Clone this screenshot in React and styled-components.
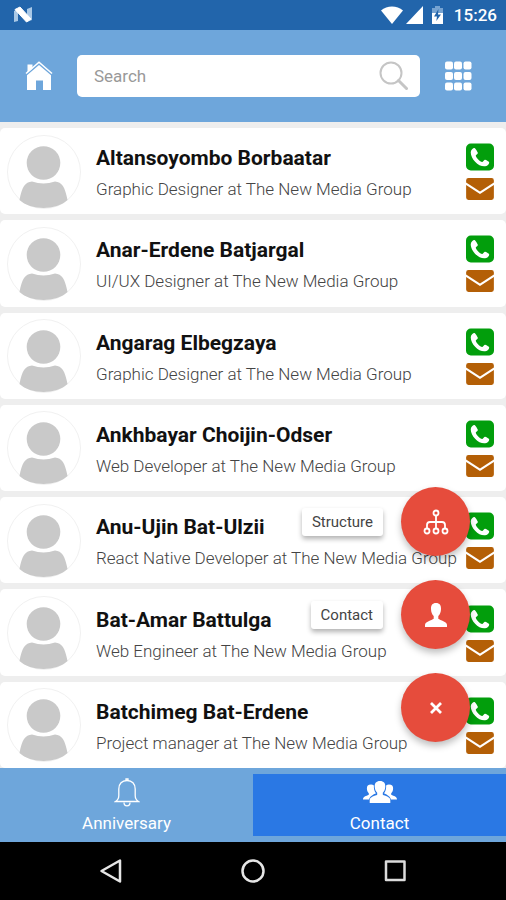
import React, { useState } from "react";
import styled, { createGlobalStyle, css } from "styled-components";

const GlobalStyle = createGlobalStyle`
  * {
    box-sizing: border-box;
  }

  body {
    margin: 0;
    background: #000;
    font-family: Roboto, "Liberation Sans", sans-serif;
  }

  button,
  input {
    font-family: inherit;
  }
`;

const Screen = styled.div`
  display: flex;
  flex-direction: column;
  min-height: 100vh;
`;

const StatusBar = styled.div`
  display: flex;
  align-items: center;
  height: 30px;
  padding: 0 9px 0 13px;
  background: #2265ab;
  color: #fff;
`;

const StatusIcons = styled.div`
  display: flex;
  align-items: center;
  gap: 3px;
  margin-left: auto;
`;

const Clock = styled.time`
  margin-left: 3px;
  font-size: 17px;
  line-height: 20px;
  font-weight: 500;
`;

const Header = styled.header`
  display: flex;
  align-items: center;
  height: 92px;
  padding: 0 34px 0 25px;
  gap: 24px;
  background: #6ea6db;
`;

const IconButton = styled.button`
  display: flex;
  padding: 0;
  border: 0;
  background: none;
  color: #fff;
  cursor: pointer;
`;

const SearchBox = styled.label`
  display: flex;
  flex: 1;
  align-items: center;
  min-width: 0;
  height: 42px;
  padding: 0 12px 0 17px;
  border-radius: 5px;
  background: #fff;
`;

const SearchInput = styled.input`
  flex: 1;
  min-width: 0;
  padding: 0;
  border: 0;
  outline: 0;
  background: none;
  font-size: 17px;
  line-height: 20px;
  color: #333;

  &::placeholder {
    color: #999;
    opacity: 1;
  }
`;

const Main = styled.main`
  position: relative;
  display: flex;
  flex: 1;
  flex-direction: column;
  background: #eee;
`;

const List = styled.ul`
  display: flex;
  flex: 1;
  flex-direction: column;
  gap: 6px;
  margin: 0;
  padding: 6px 0 0;
  list-style: none;
`;

const Card = styled.li`
  display: flex;
  flex: 1;
  align-items: center;
  padding: 5px 12px 4px 7px;
  border-radius: 5px;
  background: #fff;
`;

const Info = styled.div`
  flex: 1;
  min-width: 0;
  margin-left: 15px;
`;

const Name = styled.h2`
  margin: 0;
  padding-top: 2px;
  font-size: 21px;
  line-height: 26px;
  font-weight: 700;
  color: #111;
  white-space: nowrap;
`;

const Job = styled.p`
  margin: 7px 0 0;
  font-size: 17px;
  line-height: 22px;
  font-weight: 300;
  color: #444;
  white-space: nowrap;
`;

const Actions = styled.div`
  display: flex;
  flex-direction: column;
  gap: 7px;
`;

const FabMenu = styled.div`
  position: absolute;
  right: 36px;
  bottom: 26px;
  display: flex;
  flex-direction: column;
  align-items: flex-end;
  gap: 24px;
`;

const FabRow = styled.div`
  display: flex;
  align-items: center;
  gap: 18px;
`;

const FabLabel = styled.label`
  padding: 4px 10px;
  border-radius: 3px;
  background: #fff;
  box-shadow: 0 3px 5px rgba(0, 0, 0, 0.3);
  font-size: 15px;
  line-height: 20px;
  color: #444;
  cursor: pointer;
`;

const Fab = styled.button`
  display: flex;
  align-items: center;
  justify-content: center;
  width: 69px;
  height: 69px;
  padding: 0;
  border: 0;
  border-radius: 50%;
  background: #e64c3c;
  box-shadow: 0 4px 7px rgba(0, 0, 0, 0.25);
  color: #fff;
  cursor: pointer;
`;

const TabBar = styled.nav`
  display: flex;
  padding: 6px 0;
  background: #6ea6db;
`;

const Tab = styled.button`
  display: flex;
  flex: 1;
  flex-direction: column;
  align-items: center;
  gap: 4px;
  padding: 4px 0 2px;
  border: 0;
  background: none;
  font-size: 17px;
  line-height: 22px;
  color: #fff;
  cursor: pointer;

  ${({ $active }) =>
    $active &&
    css`
      background: #2a78e4;
    `}
`;

const SystemBar = styled.div`
  display: flex;
  align-items: center;
  justify-content: center;
  gap: 118px;
  height: 58px;
  background: #000;
`;

const NougatIcon = () => (
  <svg width="20" height="18" viewBox="0 0 20 18" aria-hidden="true">
    <path d="M1 5l4-2v12l-4 1z" fill="#a9c8e6" />
    <path d="M14 3l5-2v13l-5 2z" fill="#a9c8e6" />
    <path d="M2 3.500l5-2.500 11 12-4.500 3z" fill="#fff" stroke="#fff" strokeLinejoin="round" />
  </svg>
);

const WifiIcon = () => (
  <svg width="22" height="18" viewBox="0 0 22 18" aria-hidden="true">
    <path d="M11 18L0 4.500C6 -1 16 -1 22 4.500z" fill="#fff" />
  </svg>
);

const SignalIcon = () => (
  <svg width="17" height="18" viewBox="0 0 17 18" aria-hidden="true">
    <path d="M17 0v18H0z" fill="#fff" />
  </svg>
);

const BatteryIcon = () => (
  <svg width="22" height="18" viewBox="0 0 22 18" aria-hidden="true">
    <path d="M6 2h3V0h5v2h3v6H6z" fill="#76a3d1" />
    <path d="M6 7h11v11H6z" fill="#fff" />
    <path d="M12.500 3L8 10.500h3L10.300 15 15 8.500h-3z" fill="#2265ab" />
  </svg>
);

const HomeIcon = () => (
  <svg width="28" height="30" viewBox="0 0 28 30" aria-hidden="true">
    <path d="M2.500 3.500h5v4l-5 4.200z" fill="currentColor" />
    <path d="M1 12.500L14 1.200l13 11.300" fill="none" stroke="currentColor" strokeWidth="1.600" />
    <path d="M2 14.200L14 4l12 10.200V29h-8v-9.500h-7V29H2z" fill="currentColor" />
  </svg>
);

const SearchIcon = () => (
  <svg width="29" height="30" viewBox="0 0 29 30" fill="none" stroke="#c5c5c5" aria-hidden="true">
    <circle cx="12" cy="12" r="10.500" strokeWidth="2" />
    <path d="M19.500 19.500l8 8" strokeWidth="3" strokeLinecap="round" />
  </svg>
);

const GridIcon = () => (
  <svg width="28" height="30" viewBox="0 0 28 30" fill="currentColor" aria-hidden="true">
    {[0.5, 11, 21.5].map((y) =>
      [1, 10, 19.5].map((x) => (
        <rect key={`${x}-${y}`} x={x} y={y} width="8" height="8" rx="2" />
      ))
    )}
  </svg>
);

const Avatar = () => (
  <svg width="74" height="74" viewBox="0 0 74 74" aria-hidden="true">
    <circle cx="37" cy="37" r="36.500" fill="#fff" stroke="#f1f1f1" />
    <path
      d="M12.500 65C15 52 18 47 25 46.500c8 2.500 15 2.500 23 0 7 .5 10 5.500 12.500 18.500-11 10.500-37 10.500-48 0z"
      fill="#c9c9c9"
    />
    <circle cx="36.500" cy="28" r="18" fill="#fff" />
    <circle cx="36.500" cy="28" r="16.800" fill="#c9c9c9" />
  </svg>
);

const PhoneIcon = () => (
  <svg width="28" height="28" viewBox="0 0 29 28" aria-hidden="true">
    <rect width="29" height="28" rx="5" fill="#029e0c" />
    <path
      d="M8.800 4.700c-1-.3-3.800 1.500-3.900 4.300 0 7 7.600 14.600 14 14.700 3 0 5.300-2.100 5.100-4.300 0-.7-3.800-2.700-4.500-2.600-1 .1-1.900 2.300-2.800 2.300-2.100-.3-6.300-4.300-6.600-6.400 0-.9 2.200-1.800 2.200-2.800 0-.8-2.600-5-3.500-5.200z"
      fill="#fff"
    />
  </svg>
);

const MailIcon = () => (
  <svg width="28" height="22" viewBox="0 0 29 23" fill="#b45f06" aria-hidden="true">
    <path d="M2.500 0h24Q29 0 29 2.500v2.200L14.500 14.200 0 4.700V2.500Q0 0 2.500 0z" />
    <path d="M0 7.300l14.500 9.400L29 7.300v13.200Q29 23 26.500 23h-24Q0 23 0 20.500z" />
  </svg>
);

const StructureIcon = () => (
  <svg width="26" height="26" viewBox="0 0 26 26" fill="none" stroke="currentColor" strokeWidth="1.800" aria-hidden="true">
    <circle cx="13" cy="4" r="2.500" />
    <circle cx="4" cy="22" r="2.500" />
    <circle cx="13" cy="22" r="2.500" />
    <circle cx="22" cy="22" r="2.500" />
    <path d="M13 6.500v13M4 19.500V16q0-3 3-3h12q3 0 3 3v3.500" />
  </svg>
);

const PersonIcon = () => (
  <svg width="24" height="26" viewBox="0 0 24 26" fill="currentColor" aria-hidden="true">
    <path d="M12 1c3.600 0 5.200 2.300 5 6-.1 3-1 5.500-2.700 7v2.700c2 1.500 8.700 2.800 8.700 6.300v2H1v-2c0-3.500 6.700-4.800 8.700-6.300V14C8 12.500 7.100 10 7 7c-.2-3.700 1.400-6 5-6z" />
  </svg>
);

const CloseIcon = () => (
  <svg width="14" height="14" viewBox="0 0 14 14" fill="none" stroke="currentColor" strokeWidth="2.800" aria-hidden="true">
    <path d="M2 2l10 10M12 2L2 12" />
  </svg>
);

const BellIcon = () => (
  <svg width="26" height="30" viewBox="0 0 26 30" fill="none" stroke="currentColor" strokeWidth="1.300" aria-hidden="true">
    <path d="M1.500 23.500c2.500-1.500 3.300-3 3.300-6v-6.500C4.800 5.800 8 2.500 13 2.500s8.200 3.300 8.200 8.500v6.500c0 3 .8 4.500 3.300 6z" />
    <path d="M12 2V1h2v1M10 24.500c0 4.500 6 4.500 6 0" />
  </svg>
);

const GroupIcon = () => (
  <svg width="34" height="30" viewBox="0 0 34 30" fill="currentColor" aria-hidden="true">
    <path d="M17 3c3.800 0 5.400 2.200 5.300 5.700-.1 2.600-1 4.600-2.500 6v2c2 1.300 7.500 1.700 7.500 5.300V25H6.700v-3c0-3.600 5.500-4 7.500-5.300v-2c-1.500-1.400-2.400-3.400-2.500-6C11.600 5.200 13.200 3 17 3z" />
    <path d="M8 6.500c1.200 0 2.200.3 2.900 1-.2 3 .3 5.500 2 7.700-1.500 1.200-5.500 1.800-6.900 6.300H0c0-3 3-3.300 5.800-4.700v-1.600C4.500 14 4 12.500 3.900 10.500 3.800 8 5 6.500 8 6.500zM26 6.500c-1.200 0-2.200.3-2.900 1 .2 3-.3 5.500-2 7.700 1.500 1.200 5.500 1.800 6.900 6.300h6c0-3-3-3.300-5.800-4.700v-1.600c1.300-1.200 1.800-2.700 1.900-4.700.1-2.500-1.100-4-4.100-4z" />
  </svg>
);

const BackIcon = () => (
  <svg width="24" height="24" viewBox="0 0 24 24" fill="none" stroke="#e6e6e6" strokeWidth="2.500" strokeLinejoin="round" aria-hidden="true">
    <path d="M21 1.500v21L2.500 12z" />
  </svg>
);

const CircleIcon = () => (
  <svg width="24" height="24" viewBox="0 0 24 24" fill="none" stroke="#e6e6e6" strokeWidth="2.500" aria-hidden="true">
    <circle cx="12" cy="12" r="10.500" />
  </svg>
);

const SquareIcon = () => (
  <svg width="24" height="24" viewBox="0 0 24 24" fill="none" stroke="#dcdcdc" strokeWidth="2.500" strokeLinejoin="round" aria-hidden="true">
    <rect x="3" y="2.500" width="18.500" height="18.500" />
  </svg>
);

const contacts = [
  { name: "Altansoyombo Borbaatar", job: "Graphic Designer at The New Media Group" },
  { name: "Anar-Erdene Batjargal", job: "UI/UX Designer at The New Media Group" },
  { name: "Angarag Elbegzaya", job: "Graphic Designer at The New Media Group" },
  { name: "Ankhbayar Choijin-Odser", job: "Web Developer at The New Media Group" },
  { name: "Anu-Ujin Bat-Ulzii", job: "React Native Developer at The New Media Group" },
  { name: "Bat-Amar Battulga", job: "Web Engineer at The New Media Group" },
  { name: "Batchimeg Bat-Erdene", job: "Project manager at The New Media Group" },
];

const App = () => {
  const [tab, setTab] = useState("contact");

  return (
    <Screen>
      <GlobalStyle />
      <StatusBar>
        <NougatIcon />
        <StatusIcons>
          <WifiIcon />
          <SignalIcon />
          <BatteryIcon />
          <Clock>15:26</Clock>
        </StatusIcons>
      </StatusBar>

      <Header>
        <IconButton aria-label="Home">
          <HomeIcon />
        </IconButton>
        <SearchBox>
          <SearchInput type="text" placeholder="Search" aria-label="Search" />
          <SearchIcon />
        </SearchBox>
        <IconButton aria-label="Menu">
          <GridIcon />
        </IconButton>
      </Header>

      <Main>
        <List>
          {contacts.map(({ name, job }) => (
            <Card key={name}>
              <Avatar />
              <Info>
                <Name>{name}</Name>
                <Job>{job}</Job>
              </Info>
              <Actions>
                <IconButton aria-label={`Call ${name}`}>
                  <PhoneIcon />
                </IconButton>
                <IconButton aria-label={`Email ${name}`}>
                  <MailIcon />
                </IconButton>
              </Actions>
            </Card>
          ))}
        </List>

        <FabMenu>
          <FabRow>
            <FabLabel htmlFor="fab-structure">Structure</FabLabel>
            <Fab id="fab-structure">
              <StructureIcon />
            </Fab>
          </FabRow>
          <FabRow>
            <FabLabel htmlFor="fab-contact">Contact</FabLabel>
            <Fab id="fab-contact">
              <PersonIcon />
            </Fab>
          </FabRow>
          <Fab aria-label="Close">
            <CloseIcon />
          </Fab>
        </FabMenu>
      </Main>

      <TabBar>
        <Tab $active={tab === "anniversary"} onClick={() => setTab("anniversary")}>
          <BellIcon />
          Anniversary
        </Tab>
        <Tab $active={tab === "contact"} onClick={() => setTab("contact")}>
          <GroupIcon />
          Contact
        </Tab>
      </TabBar>

      <SystemBar>
        <IconButton aria-label="Back">
          <BackIcon />
        </IconButton>
        <IconButton aria-label="Home screen">
          <CircleIcon />
        </IconButton>
        <IconButton aria-label="Recent apps">
          <SquareIcon />
        </IconButton>
      </SystemBar>
    </Screen>
  );
};

export default App;
